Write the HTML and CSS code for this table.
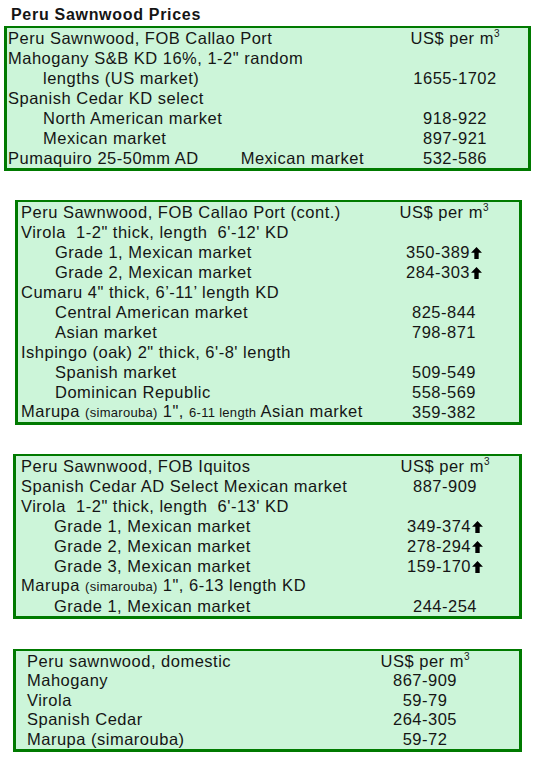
FILE: index.html
```html
<!DOCTYPE html>
<html>
<head>
<meta charset="utf-8">
<link rel="stylesheet" href="styles.css">
</head>
<body>
<div class="page">
  <div class="title">Peru Sawnwood Prices</div>

  <div class="tbl t1">
    <div class="row"><span class="lbl">Peru Sawnwood, FOB Callao Port</span><span class="val">US$ per m<sup>3</sup></span></div>
    <div class="row"><span class="lbl">Mahogany S&amp;B KD 16%, 1-2" random</span><span class="val"></span></div>
    <div class="row"><span class="lbl ind">lengths (US market)</span><span class="val">1655-1702</span></div>
    <div class="row"><span class="lbl">Spanish Cedar KD select</span><span class="val"></span></div>
    <div class="row"><span class="lbl ind">North American market</span><span class="val">918-922</span></div>
    <div class="row"><span class="lbl ind">Mexican market</span><span class="val">897-921</span></div>
    <div class="row"><span class="lbl">Pumaquiro 25-50mm AD<span class="mkt">Mexican market</span></span><span class="val">532-586</span></div>
  </div>

  <div class="tbl t2">
    <div class="row"><span class="lbl">Peru Sawnwood, FOB Callao Port (cont.)</span><span class="val">US$ per m<sup>3</sup></span></div>
    <div class="row"><span class="lbl">Virola&nbsp; 1-2" thick, length&nbsp; 6'-12' KD</span><span class="val"></span></div>
    <div class="row"><span class="lbl ind">Grade 1, Mexican market</span><span class="val">350-389<svg class="up" viewBox="0 0 10 11"><polygon points="5,0 10,5.2 7,5.2 7,11 3,11 3,5.2 0,5.2"/></svg></span></div>
    <div class="row"><span class="lbl ind">Grade 2, Mexican market</span><span class="val">284-303<svg class="up" viewBox="0 0 10 11"><polygon points="5,0 10,5.2 7,5.2 7,11 3,11 3,5.2 0,5.2"/></svg></span></div>
    <div class="row"><span class="lbl">Cumaru 4" thick, 6’-11’ length KD</span><span class="val"></span></div>
    <div class="row"><span class="lbl ind">Central American market</span><span class="val">825-844</span></div>
    <div class="row"><span class="lbl ind">Asian market</span><span class="val">798-871</span></div>
    <div class="row"><span class="lbl">Ishpingo (oak) 2" thick, 6'-8' length</span><span class="val"></span></div>
    <div class="row"><span class="lbl ind">Spanish market</span><span class="val">509-549</span></div>
    <div class="row"><span class="lbl ind">Dominican Republic</span><span class="val">558-569</span></div>
    <div class="row"><span class="lbl">Marupa <small>(simarouba)</small> 1", <small>6-11 length</small> Asian market</span><span class="val">359-382</span></div>
  </div>

  <div class="tbl t3">
    <div class="row"><span class="lbl">Peru Sawnwood, FOB Iquitos</span><span class="val">US$ per m<sup>3</sup></span></div>
    <div class="row"><span class="lbl">Spanish Cedar AD Select Mexican market</span><span class="val">887-909</span></div>
    <div class="row"><span class="lbl">Virola&nbsp; 1-2" thick, length&nbsp; 6'-13' KD</span><span class="val"></span></div>
    <div class="row"><span class="lbl ind">Grade 1, Mexican market</span><span class="val">349-374<svg class="up" viewBox="0 0 10 11"><polygon points="5,0 10,5.2 7,5.2 7,11 3,11 3,5.2 0,5.2"/></svg></span></div>
    <div class="row"><span class="lbl ind">Grade 2, Mexican market</span><span class="val">278-294<svg class="up" viewBox="0 0 10 11"><polygon points="5,0 10,5.2 7,5.2 7,11 3,11 3,5.2 0,5.2"/></svg></span></div>
    <div class="row"><span class="lbl ind">Grade 3, Mexican market</span><span class="val">159-170<svg class="up" viewBox="0 0 10 11"><polygon points="5,0 10,5.2 7,5.2 7,11 3,11 3,5.2 0,5.2"/></svg></span></div>
    <div class="row"><span class="lbl">Marupa <small>(simarouba)</small> 1", 6-13 length KD</span><span class="val"></span></div>
    <div class="row"><span class="lbl ind">Grade 1, Mexican market</span><span class="val">244-254</span></div>
  </div>

  <div class="tbl t4">
    <div class="row"><span class="lbl">Peru sawnwood, domestic</span><span class="val">US$ per m<sup>3</sup></span></div>
    <div class="row"><span class="lbl">Mahogany</span><span class="val">867-909</span></div>
    <div class="row"><span class="lbl">Virola</span><span class="val">59-79</span></div>
    <div class="row"><span class="lbl">Spanish Cedar</span><span class="val">264-305</span></div>
    <div class="row"><span class="lbl">Marupa (simarouba)</span><span class="val">59-72</span></div>
  </div>
</div>
</body>
</html>
```

FILE: styles.css
```css
html, body {
  margin: 0;
  padding: 0;
  background: #ffffff;
}

.page {
  font-family: "Liberation Sans", Arial, sans-serif;
  color: #151515;
  font-size: 16.5px;
  letter-spacing: 0.5px;
  width: 539px;
}

.title {
  font-weight: bold;
  font-size: 16px;
  letter-spacing: 0.7px;
  line-height: 18px;
  padding: 6px 0 2px 11px;
  height: 18px;
}

.tbl {
  box-sizing: border-box;
  background: #ccf5d9;
  border: 3px solid #007a00;
  border-top-width: 2px;
  display: flex;
  flex-direction: column;
}

.row {
  display: flex;
  align-items: center;
  height: 20px;
  line-height: 20px;
  white-space: nowrap;
}

.lbl {
  flex: 1;
  min-width: 0;
}

.lbl.ind {
  padding-left: 35px;
}

.val {
  width: 100px;
  text-align: center;
  flex-shrink: 0;
}

.mkt {
  margin-left: 42px;
}

small {
  font-size: 13px;
  letter-spacing: 0.3px;
}

sup {
  font-size: 10px;
  line-height: 0;
  vertical-align: 7px;
  letter-spacing: 0;
}

.up {
  width: 11px;
  height: 12px;
  margin-left: 1px;
  vertical-align: -1px;
  fill: #000;
}

.t1 {
  margin-left: 4px;
  width: 527px;
  padding: 0 23px 0 1px;
}

.t2 {
  margin: 29px 0 0 15px;
  width: 507px;
  padding: 0 25px 0 3px;
}
.t2 .lbl.ind {
  padding-left: 34px;
}

.t3 {
  margin: 29px 0 0 13px;
  width: 509px;
  padding: 0 24px 0 5px;
}
.t3 .lbl.ind {
  padding-left: 33px;
}

.t4 {
  margin: 30px 0 0 13px;
  width: 509px;
  padding: 0 44px 0 11px;
}
.t4 .row {
  height: 19.5px;
}
```
